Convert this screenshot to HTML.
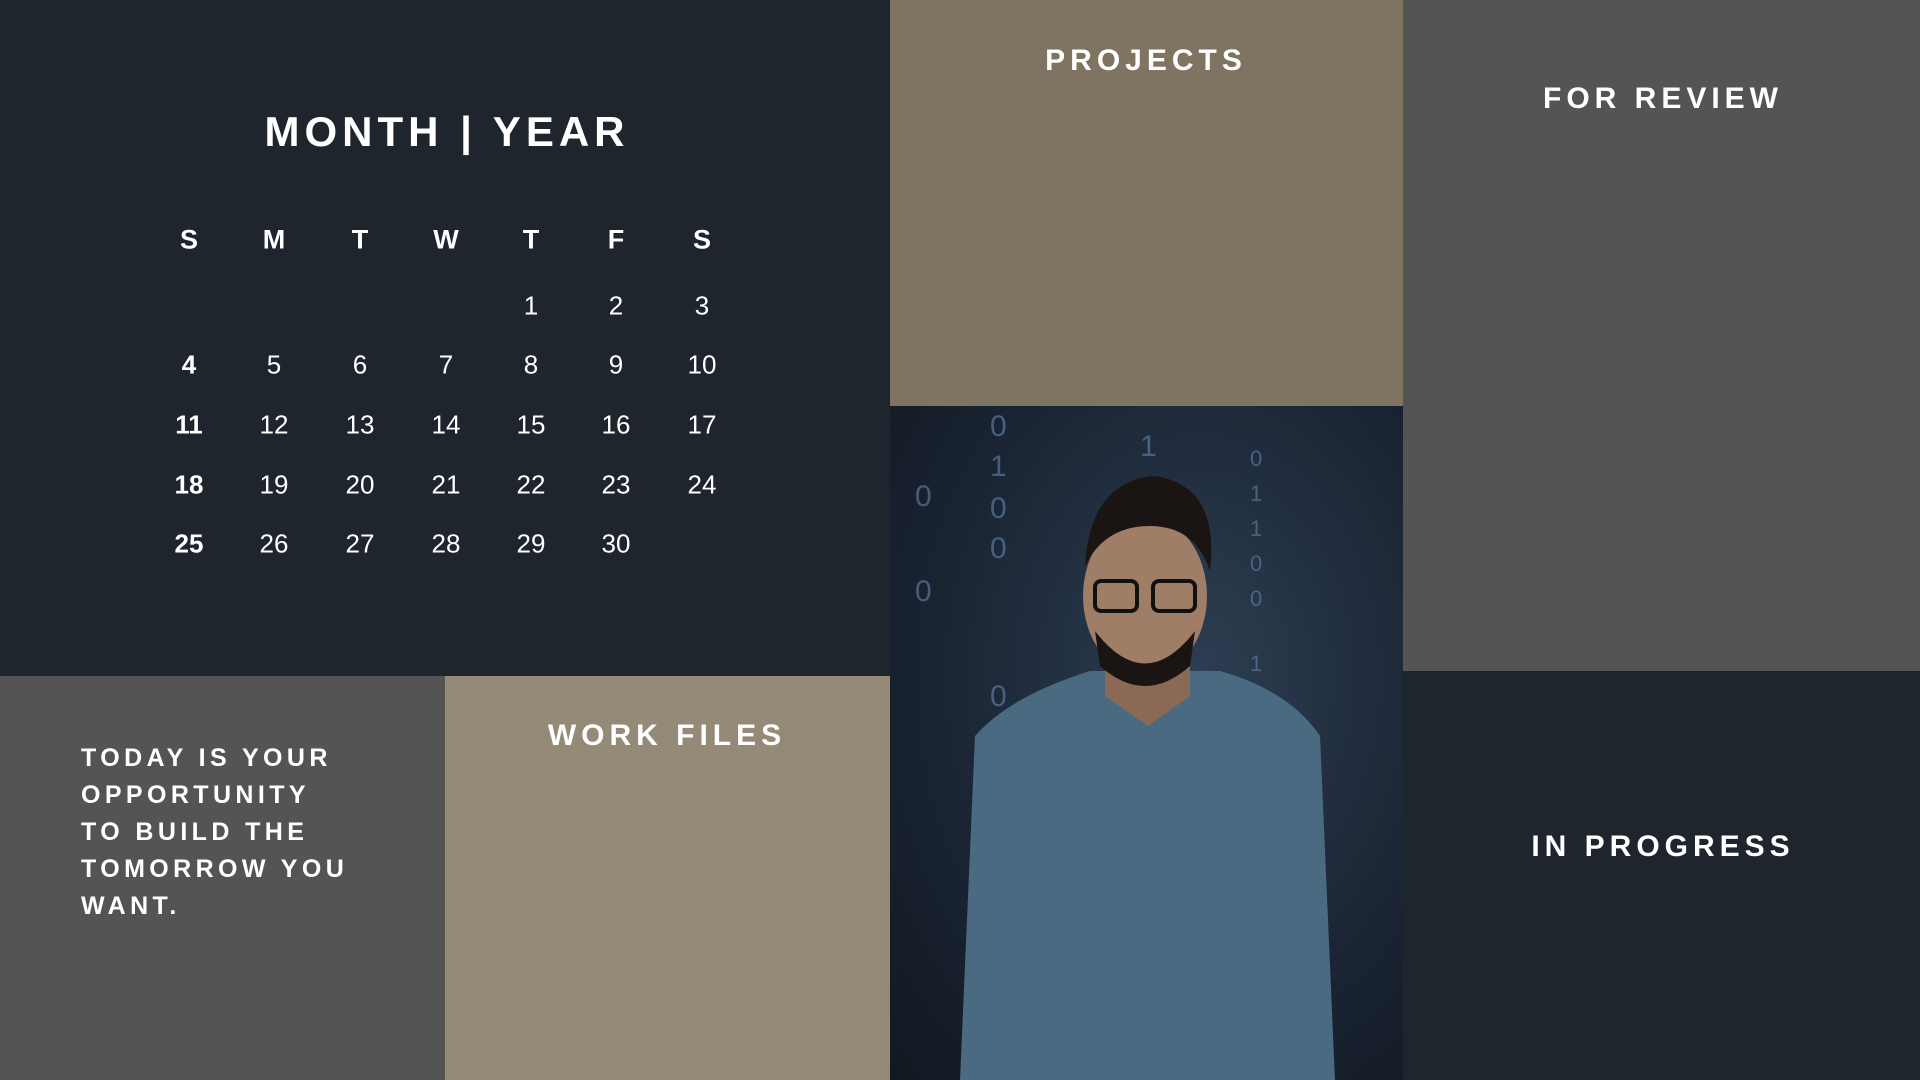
<!DOCTYPE html>
<html><head><meta charset="utf-8"><style>
*{margin:0;padding:0;box-sizing:border-box}
body{width:1920px;height:1080px;position:relative;overflow:hidden;font-family:"Liberation Sans",sans-serif;color:#fff;background:#1f252d}
.p{position:absolute}
.c{position:absolute;transform:translate(-50%,-50%);white-space:nowrap}
.h{font-weight:bold;letter-spacing:5px;font-size:30px}
</style></head><body>
<div class="p" style="left:0;top:0;width:890px;height:676px;background:#1f252d"></div>
<div class="p" style="left:890px;top:0;width:513px;height:406px;background:#7f7461"></div>
<div class="p" style="left:1403px;top:0;width:517px;height:671px;background:#545454"></div>
<div class="p" style="left:1403px;top:671px;width:517px;height:409px;background:#1f252d"></div>
<div class="p" style="left:0;top:676px;width:445px;height:404px;background:#545454"></div>
<div class="p" style="left:445px;top:676px;width:445px;height:404px;background:#958a78"></div>
<div class="p" style="left:890px;top:406px;width:513px;height:674px;background:radial-gradient(ellipse at 60% 40%,#2d3e52 0%,#1a2433 60%,#111820 100%);overflow:hidden">
<svg width="513" height="674" viewBox="0 0 513 674">
<g fill="#5a78a0" font-family="Liberation Sans" font-size="30" opacity="0.7">
<text x="100" y="30">0</text><text x="100" y="70">1</text><text x="100" y="112">0</text><text x="100" y="152">0</text><text x="25" y="100">0</text><text x="25" y="195">0</text><text x="250" y="50">1</text><text x="100" y="300">0</text><text x="100" y="340">1</text>
<text x="360" y="60" font-size="22">0</text><text x="360" y="95" font-size="22">1</text><text x="360" y="130" font-size="22">1</text><text x="360" y="165" font-size="22">0</text><text x="360" y="200" font-size="22">0</text><text x="360" y="265" font-size="22">1</text><text x="360" y="300" font-size="22">1</text><text x="360" y="335" font-size="22">0</text>
</g>
<path d="M70 674 L85 330 Q120 290 200 265 L330 265 Q400 285 430 330 L445 674Z" fill="#4a6a82"/>
<path d="M215 240 L300 240 L300 290 L258 320 L215 290Z" fill="#8a6a55"/>
<ellipse cx="255" cy="190" rx="62" ry="80" fill="#a07d66"/>
<path d="M195 160 Q200 75 265 70 Q330 80 320 165 Q305 120 260 120 Q215 120 195 160Z" fill="#1a1412"/>
<path d="M205 225 Q255 290 305 225 L300 260 Q255 300 210 260Z" fill="#1a1412"/>
<rect x="205" y="175" width="42" height="30" rx="6" fill="none" stroke="#111" stroke-width="4"/>
<rect x="263" y="175" width="42" height="30" rx="6" fill="none" stroke="#111" stroke-width="4"/>
</svg></div>

<div class="c h" style="left:447px;top:132px;font-size:42px;letter-spacing:5px">MONTH | YEAR</div>
<div id="cal"></div>

<div class="c h" style="left:1146px;top:61px">PROJECTS</div>
<div class="c h" style="left:1663px;top:99px">FOR REVIEW</div>
<div class="c h" style="left:1663px;top:847px">IN PROGRESS</div>
<div class="c h" style="left:667px;top:736px">WORK FILES</div>
<div class="p" style="left:81px;top:740px;font-size:25px;font-weight:bold;letter-spacing:4.4px;line-height:37px">TODAY IS YOUR<br>OPPORTUNITY<br>TO BUILD THE<br>TOMORROW YOU<br>WANT.</div>
<script>
var xs=[189,274,360,446,531,616,702],ys=[306,365,425,485,544],h=["S","M","T","W","T","F","S"],o="";
h.forEach(function(t,i){o+='<div class="c" style="left:'+xs[i]+'px;top:240px;font-size:27px;font-weight:bold">'+t+'</div>'});
for(var d=1;d<=30;d++){var k=d+3,c=k%7,r=Math.floor(k/7);o+='<div class="c" style="left:'+xs[c]+'px;top:'+ys[r]+'px;font-size:26px;'+(c==0?'font-weight:bold':'')+'">'+d+'</div>'}
document.getElementById("cal").innerHTML=o;
</script>
</body></html>
